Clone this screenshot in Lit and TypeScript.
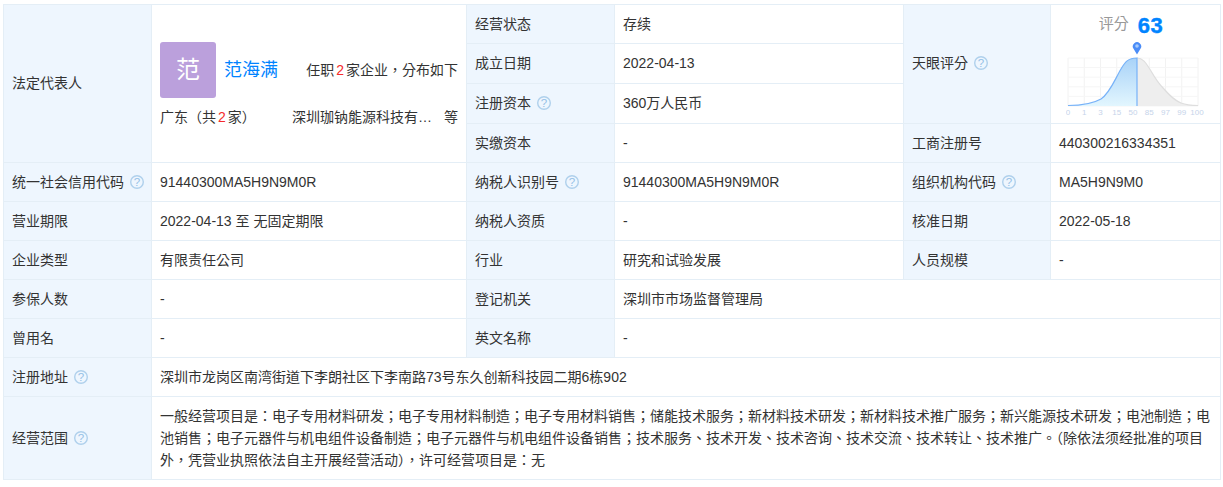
import { LitElement, html, css, svg } from "lit";
import { customElement } from "lit/decorators.js";

const help = html`<svg class="help" viewBox="0 0 14 14" width="14" height="14"><circle cx="7" cy="7" r="6.3" fill="none" stroke="#afd0ec" stroke-width="1.4"/><text x="7" y="11" text-anchor="middle" font-size="11.5" fill="#94bfe6" font-family="Liberation Sans">?</text></svg>`;

@customElement("app-root")
export class AppRoot extends LitElement {
  static styles = css`
    :host { display: block; padding: 4px 3px 0 3px; font-family: "Liberation Sans", "Noto Sans CJK TC", sans-serif; font-size: 14px; color: #333; background: #fff; box-sizing: border-box; width: 1223px; }
    table { border-collapse: collapse; table-layout: fixed; width: 1217px; }
    td { border: 1px solid #e4eef6; padding: 0 8px; height: 39px; line-height: 20px; box-sizing: border-box; overflow: hidden; white-space: nowrap; }
    tr.tall td { height: 40px; padding-bottom: 2px; }
    td.mid { padding-bottom: 2px; }
    td.rep { padding-top: 2px; }
    td.l { background: #eef6fe; }
    td.wrap { white-space: normal; height: 83px; padding: 0 8px; line-height: 22px; word-break: break-all; }
    .help { vertical-align: -2px; margin-left: 6px; }
    .row { display: flex; align-items: center; }
    .avatar { width: 56px; height: 56px; border-radius: 3px; background: #bba0dc; color: #fff; font-size: 24px; display: flex; align-items: center; justify-content: center; margin-right: 8px; flex: none; }
    .name { color: #0084ff; font-size: 18px; }
    .sum { margin-left: auto; }
    .second { margin-top: 9px; }
    .red { color: #f52b2b; padding: 0 2px; }
    .co { flex: none; width: 140px; margin-left: auto; margin-right: 12px; }
    .score { padding: 0; text-align: center; vertical-align: top; }
    .st { display: flex; justify-content: center; align-items: center; gap: 9px; height: 38px; color: #999; font-size: 15px; padding-right: 9px; }
    .st b { color: #0084ff; font: 700 22px "Liberation Sans", sans-serif; letter-spacing: 0.5px; -webkit-text-stroke: 0.4px #0084ff; margin-top: 3px; }
    .chart { display: block; margin: -2px 0 0 15px; }
  `;

  render() {
    const left = "M2 64.5 C18 64.5 28 62 35 58 C44 52 49 38 55 28 C59 21 62 17 71 17";
    const right = "C78 17 81 24 85 30 C89 37 93 43 98 48 C104 55 110 60 115 62 C120 64 126 64.5 132 64.5";
    return html`<table>
      <colgroup><col style="width:148px"><col style="width:315px"><col style="width:148px"><col style="width:289px"><col style="width:147px"><col style="width:170px"></colgroup>
      <tr>
        <td class="l mid" rowspan="4">法定代表人</td>
        <td class="rep" rowspan="4">
          <div class="row"><div class="avatar">范</div><span class="name">范海满</span><span class="sum">任职<span class="red">2</span>家企业，分布如下</span></div>
          <div class="row second"><span>广东（共<span class="red">2</span>家）</span><span class="co">深圳珈钠能源科技有…</span><span>等</span></div>
        </td>
        <td class="l">经营状态</td><td>存续</td>
        <td class="l mid" rowspan="3">天眼评分${help}</td>
        <td class="score" rowspan="3">
          <div class="st"><span>评分</span><b>63</b></div>
          <svg class="chart" width="145" height="75" viewBox="0 0 145 75">
            ${[0,1,2,3,4,5,6,7,8].map(i => svg`<line x1="${2+i*16.25}" x2="${2+i*16.25}" y1="17" y2="65" stroke="#f2f2f2"/>`)}
            ${[0,1,2,3,4,5].map(i => svg`<line x1="2" x2="132" y1="${17+i*9.6}" y2="${17+i*9.6}" stroke="#f6f6f6"/>`)}
            <defs><linearGradient id="g" x1="0" y1="0" x2="0" y2="1"><stop offset="0" stop-color="#a8d2f8"/><stop offset="1" stop-color="#e2f6fe"/></linearGradient></defs>
            <path d="M71 17 ${right} L132 65 L71 65 Z" fill="#eeeeee"/>
            <path d="M71 17 ${right}" fill="none" stroke="#dedede" stroke-width="1.2"/>
            <path d="${left} L71 65 L2 65 Z" fill="url(#g)"/>
            <path d="${left} L71 65" fill="none" stroke="#77b2f8" stroke-width="1.2"/>
            <path d="M71 13.5 L67.4 7.5 A4.2 4.2 0 1 1 74.6 7.5 Z" fill="#4a8cf7"/><circle cx="71" cy="5" r="1.8" fill="#a8cbfb"/>
            <text y="74" font-size="8" fill="#c6d4ea" font-family="Liberation Sans">
              ${["0","1","3","15","50","85","97","99","100"].map((t,i)=>svg`<tspan x="${(i==8?-1:0)+2+i*16.25}" text-anchor="middle">${t}</tspan>`)}
            </text>
          </svg>
        </td>
      </tr>
      <tr class="tall"><td class="l">成立日期</td><td>2022-04-13</td></tr>
      <tr class="tall"><td class="l">注册资本${help}</td><td>360万人民币</td></tr>
      <tr><td class="l">实缴资本</td><td>-</td><td class="l">工商注册号</td><td>440300216334351</td></tr>
      <tr><td class="l">统一社会信用代码${help}</td><td>91440300MA5H9N9M0R</td><td class="l">纳税人识别号${help}</td><td>91440300MA5H9N9M0R</td><td class="l">组织机构代码${help}</td><td>MA5H9N9M0</td></tr>
      <tr><td class="l">营业期限</td><td>2022-04-13 至 无固定期限</td><td class="l">纳税人资质</td><td>-</td><td class="l">核准日期</td><td>2022-05-18</td></tr>
      <tr><td class="l">企业类型</td><td>有限责任公司</td><td class="l">行业</td><td>研究和试验发展</td><td class="l">人员规模</td><td>-</td></tr>
      <tr><td class="l">参保人数</td><td>-</td><td class="l">登记机关</td><td colspan="3">深圳市市场监督管理局</td></tr>
      <tr><td class="l">曾用名</td><td>-</td><td class="l">英文名称</td><td colspan="3">-</td></tr>
      <tr><td class="l">注册地址${help}</td><td colspan="5">深圳市龙岗区南湾街道下李朗社区下李南路73号东久创新科技园二期6栋902</td></tr>
      <tr><td class="l">经营范围${help}</td><td class="wrap" colspan="5">一般经营项目是：电子专用材料研发；电子专用材料制造；电子专用材料销售；储能技术服务；新材料技术研发；新材料技术推广服务；新兴能源技术研发；电池制造；电池销售；电子元器件与机电组件设备制造；电子元器件与机电组件设备销售；技术服务、技术开发、技术咨询、技术交流、技术转让、技术推广。（除依法须经批准的项目外，凭营业执照依法自主开展经营活动），许可经营项目是：无</td></tr>
    </table>`;
  }
}
